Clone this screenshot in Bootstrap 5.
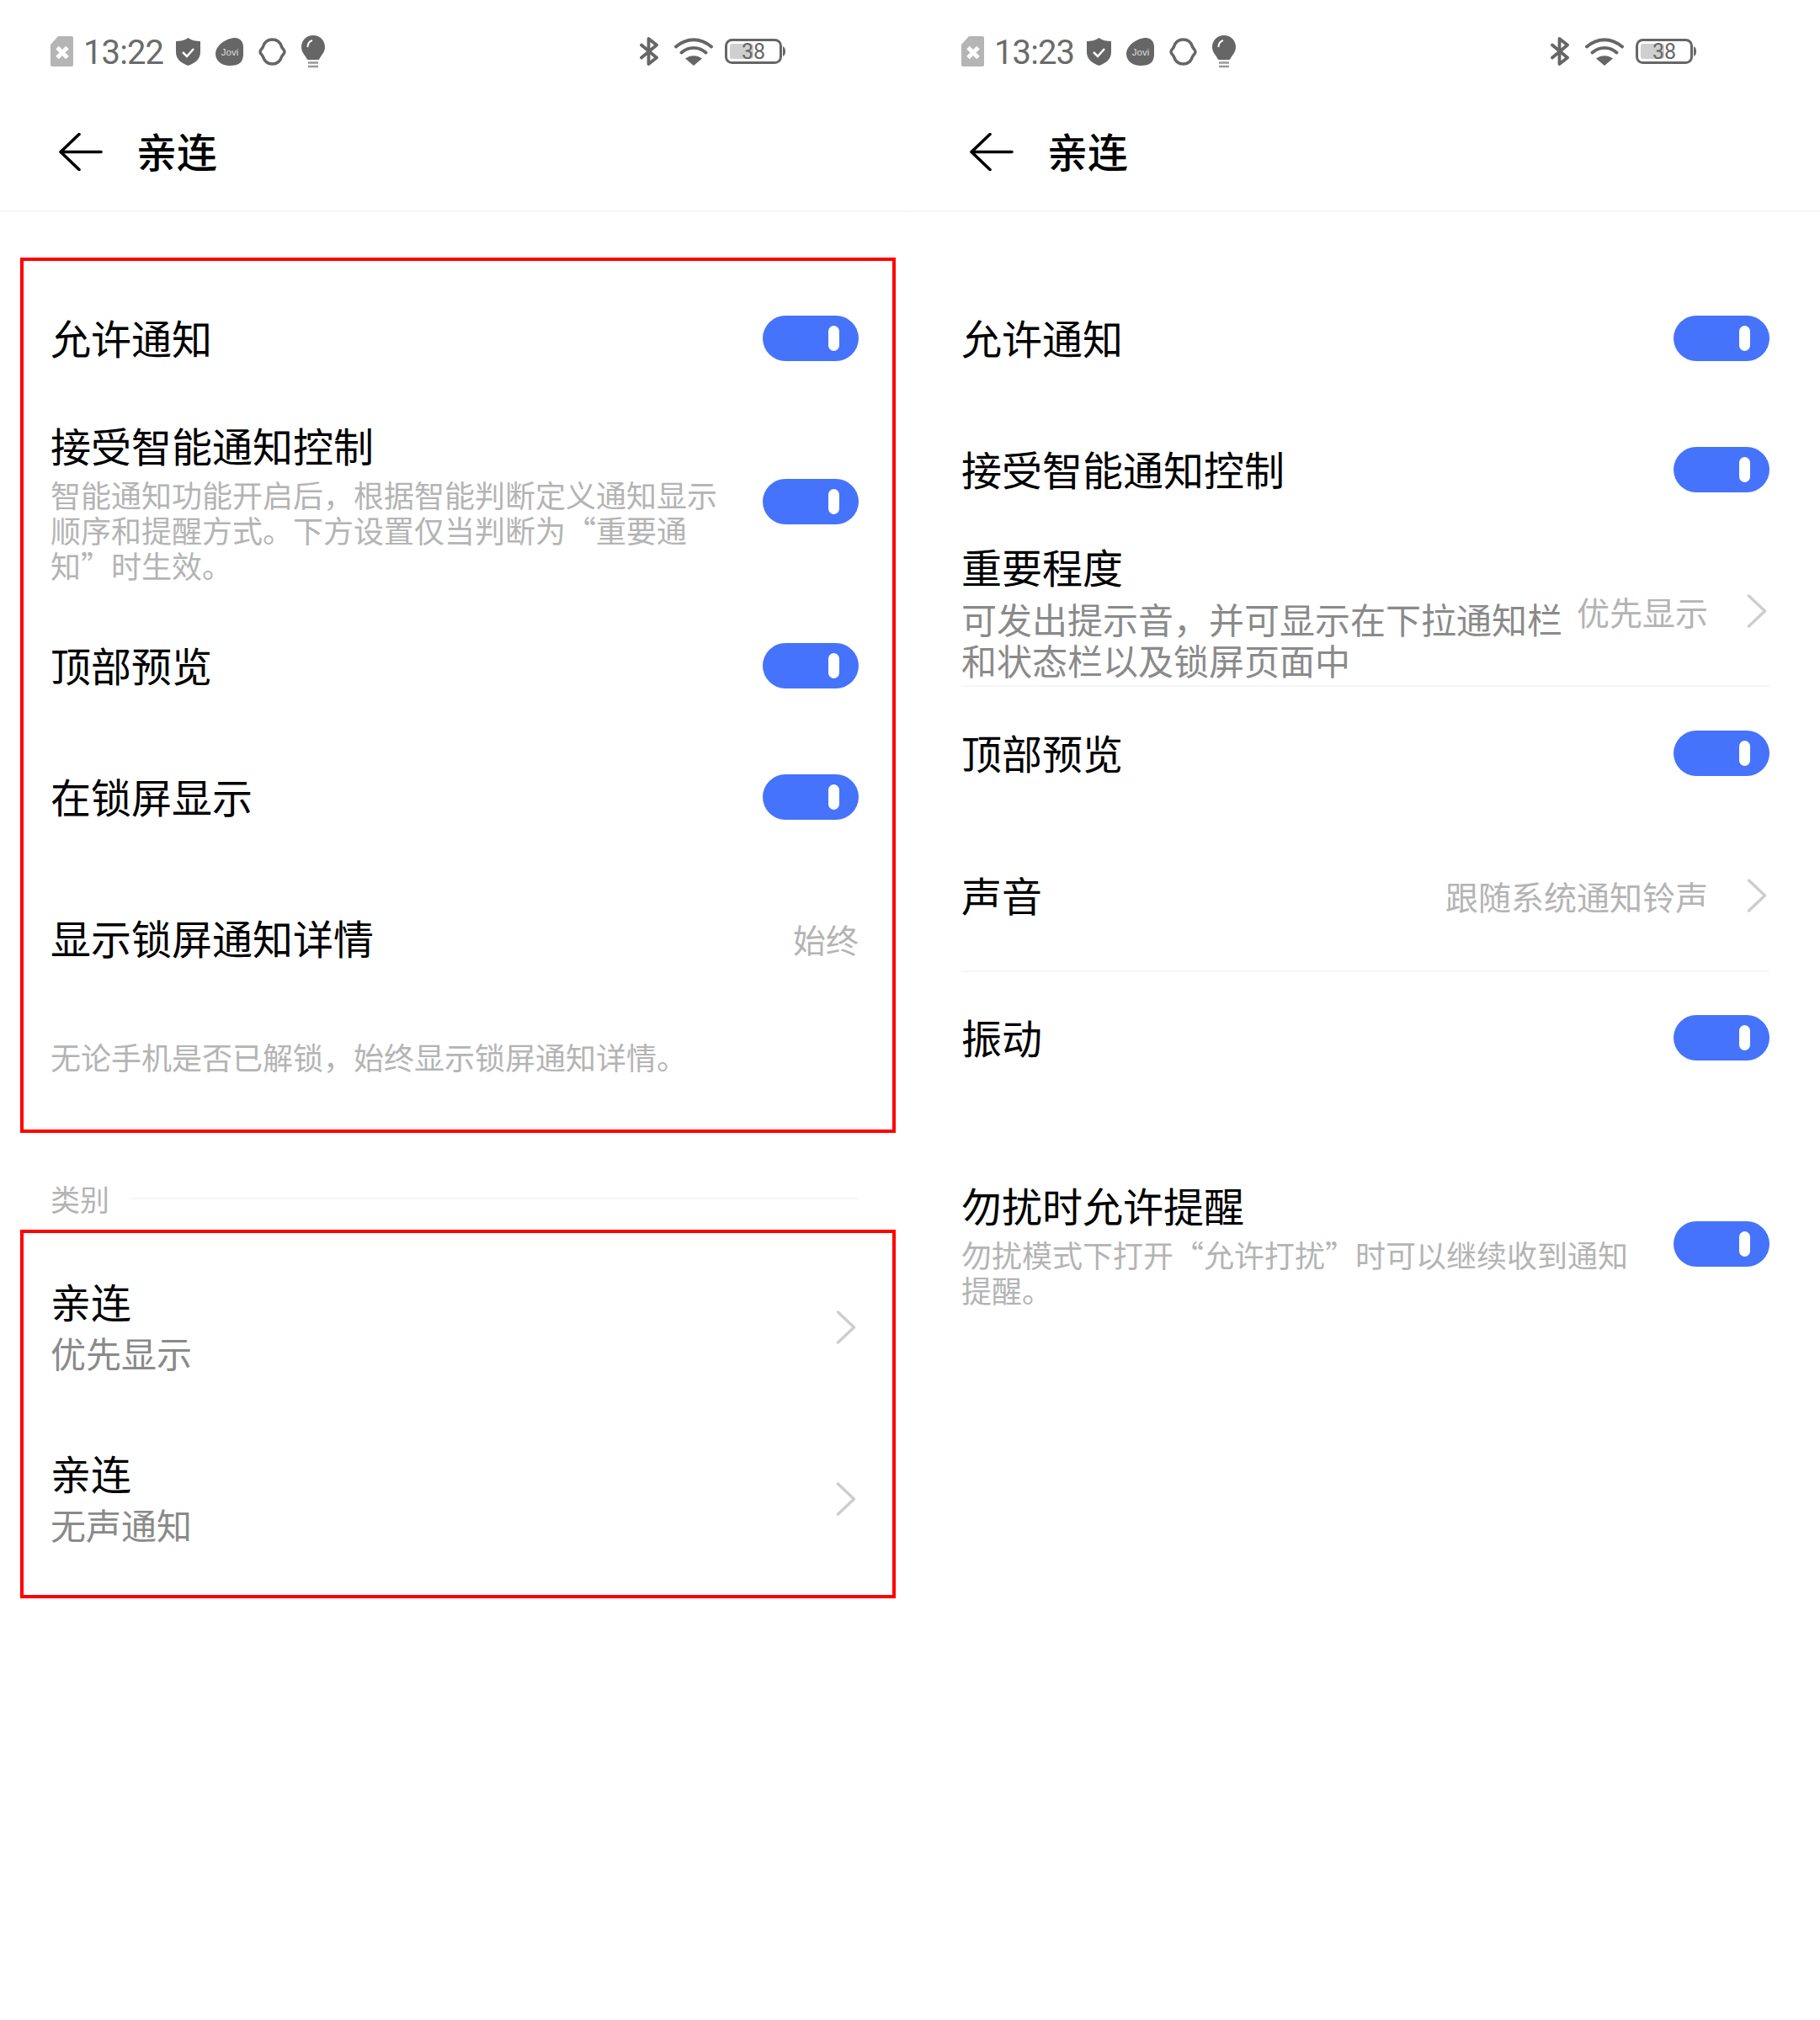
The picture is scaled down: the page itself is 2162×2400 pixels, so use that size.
<!DOCTYPE html>
<html lang="zh-CN">
<head>
<meta charset="utf-8">
<title>亲连</title>
<link href="https://cdn.jsdelivr.net/npm/bootstrap@5.3.0/dist/css/bootstrap.min.css" rel="stylesheet">
<style>
body{background:#fff;font-family:"Noto Sans CJK SC","Liberation Sans",sans-serif;color:#000;width:2162px;min-height:2400px}
.panel{width:1081px;flex:none}
.panel-b{width:1080px;margin-left:1px}
.panel-b .sbar{padding-right:147px}
.sbar{height:122px;padding:0 148px 0 60px}
.sbar svg{display:block;flex:none}
.clock{font:400 40px/1 Roboto,"Liberation Sans",sans-serif;color:#6b6b6b;letter-spacing:-.9px;margin:3px 15px 0 12px}
.ic-sp{margin-right:18px}
.tophead{height:130px;padding-left:70px;padding-bottom:14px;border-bottom:2px solid #f6f6f6}
.tophead svg{margin-top:2px}
.tophead-title{font-size:48px;font-weight:500;line-height:60px;margin:0 0 2px 40px}
.zone{width:1040px;margin-left:24px;border:4px solid transparent;padding-left:32px;padding-right:40px}
.zone-red{border-color:#f00}
.zone-a{margin-top:54px}
.ttl{font-size:48px;line-height:57px;padding-bottom:3px;color:#000;white-space:nowrap}
.sub1{font-size:36px;line-height:42px;color:#b4b4b4;white-space:nowrap;margin-top:6px}
.sub2{font-size:42px;line-height:49px;color:#8a8a8a;white-space:nowrap;margin-top:6px}
.sub3{font-size:42px;line-height:60px;color:#8a8a8a}
.val{font-size:39px;line-height:50px;color:#b4b4b4;white-space:nowrap}
.chev{margin-left:46px;margin-right:3px;flex:none}
.note{font-size:36px;color:#b4b4b4;height:146px}
.sw{width:114px;height:54px;border-radius:27px;background:#4673fb;flex:none;padding:12px 23px 12px 0}
.sw i{display:block;width:13px;height:30px;border-radius:7px;background:#fff}
.pt38{padding-top:38px}
.h108{height:108px}.h110{height:110px}.h134{height:134px}.h156{height:156px}.h158{height:158px}.h164{height:164px}.h181{height:181px}.h202{height:202px}.h280{height:280px}.h184{height:184px}.h224{height:224px}
.mt20{margin-top:20px}
.sep{border-bottom:2px solid #f6f6f6}
.imp{height:176px}
.imp-side{margin-top:-2px}
.dnd{margin-top:91px;height:152px}
.kind{margin:48px 61px 7px 60px;height:60px;font-size:35px;color:#b4b4b4}
.kind hr{flex:1;margin:0 0 0 26px;border:0;border-top:2px solid #f6f6f6;opacity:1}
.pb14{padding-bottom:14px}
.pb22{padding-bottom:22px}
</style>
</head>
<body>
<div class="d-flex">
<!-- LEFT -->
<section class="panel">
  <div class="sbar d-flex align-items-center">
    <svg width="27" height="36" viewBox="0 0 27 36"><path d="M9 0h16a2 2 0 0 1 2 2v32a2 2 0 0 1-2 2H2a2 2 0 0 1-2-2V10z" fill="#b5b5b5"/><path d="M8 13.500l12 12M20 13.500L8 25.500" stroke="#fff" stroke-width="5"/></svg>
    <span class="clock">13:22</span>
    <svg class="ic-sp" width="29" height="33" viewBox="0 0 29 33"><path d="M14.500 0C10 3 5 4 0 4v13c0 8 6 13 14.500 16C23 30 29 25 29 17V4c-5 0-10-1-14.500-4z" fill="#666"/><path d="M8 17l5 5 8-9" fill="none" stroke="#fff" stroke-width="2.500"/></svg>
    <svg class="ic-sp" width="33" height="33" viewBox="0 0 33 33"><path d="M23 0c6 0 10 4 10 11 0 6 1 13-3 18-3 3-8 4-13 4C7 33 0 27 0 19 0 9 13 0 23 0z" fill="#666"/><text x="17" y="21" font-family="Liberation Sans,sans-serif" font-size="11.500" fill="#ddd" text-anchor="middle">Jovi</text></svg>
    <svg class="ic-sp" width="33" height="33" viewBox="0 0 33 33"><path d="M16.500 2C22 2 26 5.500 27.500 10.500c1 2.500 3.500 3.500 3.500 6s-2.500 3.500-3.500 6C26 27.500 22 31 16.500 31S7 27.500 5.500 22.500C4.500 20 2 19 2 16.500S4.500 13 5.500 10.500C7 5.500 11 2 16.500 2z" fill="none" stroke="#666" stroke-width="3.500"/></svg>
    <svg width="28" height="39" viewBox="0 0 28 39"><path d="M14 0C6 0 0 6 0 14c0 6 4 9 6 13 .6 1.300 1 2 2 2h12c1 0 1.400-.7 2-2 2-4 6-7 6-13C28 6 22 0 14 0z" fill="#666"/><path d="M7.500 14C7.500 10 10 7 13 6" fill="none" stroke="#fff" stroke-width="2"/><path d="M8 32.500h12M8 37h12" stroke="#999" stroke-width="2.500"/></svg>
    <div class="ms-auto d-flex align-items-center">
      <svg width="22" height="34" viewBox="0 0 22 34" style="margin-right:19px"><path d="M2 9.500l18 15L10.500 32V2L20 9.500 2 24.500" fill="none" stroke="#666" stroke-width="3.800" stroke-linejoin="round" stroke-linecap="round"/></svg>
      <svg width="46" height="33" viewBox="0 0 46 33" style="margin-right:14px"><path d="M2 10.500C15-.5 31-.5 44 10.500M8.500 17.500C17 10 29 10 37.500 17.500" fill="none" stroke="#666" stroke-width="3.800" stroke-linecap="round"/><path d="M13 24.500c6-4.500 14-4.500 20 0L23 33z" fill="#666"/></svg>
      <svg width="72" height="30" viewBox="0 0 72 30"><rect x="1.500" y="1.500" width="65" height="27" rx="7" fill="none" stroke="#666" stroke-width="3"/><rect x="6" y="6" width="28" height="18" rx="3" fill="#cfcfcf"/><path d="M69 9c2 1 3 3 3 6s-1 5-3 6z" fill="#666"/><text x="34" y="23.500" font-family="Roboto,Liberation Sans,sans-serif" font-size="25" fill="#666" text-anchor="middle">38</text></svg>
    </div>
  </div>
  <div class="tophead d-flex align-items-center">
    <svg width="52" height="45" viewBox="0 0 52 45"><path d="M24 1.500L2 22.500l22 21M2 22.500h48" fill="none" stroke="#000" stroke-width="3.600" stroke-linecap="round" stroke-linejoin="round"/></svg>
    <span class="tophead-title">亲连</span>
  </div>

  <div class="zone zone-a zone-red pt38 pb14">
    <div class="h108 d-flex align-items-center justify-content-between"><span class="ttl">允许通知</span><span class="sw"><i class="ms-auto"></i></span></div>
    <div class="h280 d-flex align-items-center justify-content-between">
      <div><div class="ttl">接受智能通知控制</div><div class="sub1">智能通知功能开启后，根据智能判断定义通知显示<br>顺序和提醒方式。下方设置仅当判断为“重要通<br>知”时生效。</div></div>
      <span class="sw"><i class="ms-auto"></i></span>
    </div>
    <div class="h110 d-flex align-items-center justify-content-between"><span class="ttl">顶部预览</span><span class="sw"><i class="ms-auto"></i></span></div>
    <div class="h202 d-flex align-items-center justify-content-between"><span class="ttl">在锁屏显示</span><span class="sw"><i class="ms-auto"></i></span></div>
    <div class="h134 d-flex align-items-center justify-content-between"><span class="ttl">显示锁屏通知详情</span><span class="val">始终</span></div>
    <div class="note d-flex align-items-center">无论手机是否已解锁，始终显示锁屏通知详情。</div>
  </div>

  <div class="kind d-flex align-items-center"><span>类别</span><hr></div>

  <div class="zone zone-red pb22">
    <div class="h224 d-flex align-items-center justify-content-between">
      <div><div class="ttl">亲连</div><div class="sub3">优先显示</div></div>
      <svg class="chev" width="24" height="40" viewBox="0 0 24 40"><path d="M2.500 2l19 18-19 18" fill="none" stroke="#cdcdcd" stroke-width="3.400" stroke-linecap="round" stroke-linejoin="round"/></svg>
    </div>
    <div class="h184 d-flex align-items-center justify-content-between">
      <div><div class="ttl">亲连</div><div class="sub3">无声通知</div></div>
      <svg class="chev" width="24" height="40" viewBox="0 0 24 40"><path d="M2.500 2l19 18-19 18" fill="none" stroke="#cdcdcd" stroke-width="3.400" stroke-linecap="round" stroke-linejoin="round"/></svg>
    </div>
  </div>
</section>

<!-- RIGHT -->
<section class="panel panel-b">
  <div class="sbar d-flex align-items-center">
    <svg width="27" height="36" viewBox="0 0 27 36"><path d="M9 0h16a2 2 0 0 1 2 2v32a2 2 0 0 1-2 2H2a2 2 0 0 1-2-2V10z" fill="#b5b5b5"/><path d="M8 13.500l12 12M20 13.500L8 25.500" stroke="#fff" stroke-width="5"/></svg>
    <span class="clock">13:23</span>
    <svg class="ic-sp" width="29" height="33" viewBox="0 0 29 33"><path d="M14.500 0C10 3 5 4 0 4v13c0 8 6 13 14.500 16C23 30 29 25 29 17V4c-5 0-10-1-14.500-4z" fill="#666"/><path d="M8 17l5 5 8-9" fill="none" stroke="#fff" stroke-width="2.500"/></svg>
    <svg class="ic-sp" width="33" height="33" viewBox="0 0 33 33"><path d="M23 0c6 0 10 4 10 11 0 6 1 13-3 18-3 3-8 4-13 4C7 33 0 27 0 19 0 9 13 0 23 0z" fill="#666"/><text x="17" y="21" font-family="Liberation Sans,sans-serif" font-size="11.500" fill="#ddd" text-anchor="middle">Jovi</text></svg>
    <svg class="ic-sp" width="33" height="33" viewBox="0 0 33 33"><path d="M16.500 2C22 2 26 5.500 27.500 10.500c1 2.500 3.500 3.500 3.500 6s-2.500 3.500-3.500 6C26 27.500 22 31 16.500 31S7 27.500 5.500 22.500C4.500 20 2 19 2 16.500S4.500 13 5.500 10.500C7 5.500 11 2 16.500 2z" fill="none" stroke="#666" stroke-width="3.500"/></svg>
    <svg width="28" height="39" viewBox="0 0 28 39"><path d="M14 0C6 0 0 6 0 14c0 6 4 9 6 13 .6 1.300 1 2 2 2h12c1 0 1.400-.7 2-2 2-4 6-7 6-13C28 6 22 0 14 0z" fill="#666"/><path d="M7.500 14C7.500 10 10 7 13 6" fill="none" stroke="#fff" stroke-width="2"/><path d="M8 32.500h12M8 37h12" stroke="#999" stroke-width="2.500"/></svg>
    <div class="ms-auto d-flex align-items-center">
      <svg width="22" height="34" viewBox="0 0 22 34" style="margin-right:19px"><path d="M2 9.500l18 15L10.500 32V2L20 9.500 2 24.500" fill="none" stroke="#666" stroke-width="3.800" stroke-linejoin="round" stroke-linecap="round"/></svg>
      <svg width="46" height="33" viewBox="0 0 46 33" style="margin-right:14px"><path d="M2 10.500C15-.5 31-.5 44 10.500M8.500 17.500C17 10 29 10 37.500 17.500" fill="none" stroke="#666" stroke-width="3.800" stroke-linecap="round"/><path d="M13 24.500c6-4.500 14-4.500 20 0L23 33z" fill="#666"/></svg>
      <svg width="72" height="30" viewBox="0 0 72 30"><rect x="1.500" y="1.500" width="65" height="27" rx="7" fill="none" stroke="#666" stroke-width="3"/><rect x="6" y="6" width="28" height="18" rx="3" fill="#cfcfcf"/><path d="M69 9c2 1 3 3 3 6s-1 5-3 6z" fill="#666"/><text x="34" y="23.500" font-family="Roboto,Liberation Sans,sans-serif" font-size="25" fill="#666" text-anchor="middle">38</text></svg>
    </div>
  </div>
  <div class="tophead d-flex align-items-center">
    <svg width="52" height="45" viewBox="0 0 52 45"><path d="M24 1.500L2 22.500l22 21M2 22.500h48" fill="none" stroke="#000" stroke-width="3.600" stroke-linecap="round" stroke-linejoin="round"/></svg>
    <span class="tophead-title">亲连</span>
  </div>

  <div class="zone zone-a pt38">
    <div class="h108 d-flex align-items-center justify-content-between"><span class="ttl">允许通知</span><span class="sw"><i class="ms-auto"></i></span></div>
    <div class="h164 mt20 d-flex align-items-center justify-content-between"><span class="ttl">接受智能通知控制</span><span class="sw"><i class="ms-auto"></i></span></div>
    <div class="imp sep d-flex justify-content-between">
      <div class="pt-1"><div class="ttl">重要程度</div><div class="sub2">可发出提示音，并可显示在下拉通知栏<br>和状态栏以及锁屏页面中</div></div>
      <div class="d-flex align-items-center imp-side"><span class="val">优先显示</span><svg class="chev" width="24" height="40" viewBox="0 0 24 40"><path d="M2.500 2l19 18-19 18" fill="none" stroke="#cdcdcd" stroke-width="3.400" stroke-linecap="round" stroke-linejoin="round"/></svg></div>
    </div>
    <div class="h158 d-flex align-items-center justify-content-between"><span class="ttl">顶部预览</span><span class="sw"><i class="ms-auto"></i></span></div>
    <div class="h181 sep d-flex align-items-center justify-content-between"><span class="ttl">声音</span><div class="d-flex align-items-center"><span class="val">跟随系统通知铃声</span><svg class="chev" width="24" height="40" viewBox="0 0 24 40"><path d="M2.500 2l19 18-19 18" fill="none" stroke="#cdcdcd" stroke-width="3.400" stroke-linecap="round" stroke-linejoin="round"/></svg></div></div>
    <div class="h156 d-flex align-items-center justify-content-between"><span class="ttl">振动</span><span class="sw"><i class="ms-auto"></i></span></div>
    <div class="dnd d-flex align-items-center justify-content-between">
      <div><div class="ttl">勿扰时允许提醒</div><div class="sub1">勿扰模式下打开“允许打扰”时可以继续收到通知<br>提醒。</div></div>
      <span class="sw"><i class="ms-auto"></i></span>
    </div>
  </div>
</section>
</div>
<script src="https://cdn.jsdelivr.net/npm/bootstrap@5.3.0/dist/js/bootstrap.bundle.min.js"></script>
</body>
</html>
